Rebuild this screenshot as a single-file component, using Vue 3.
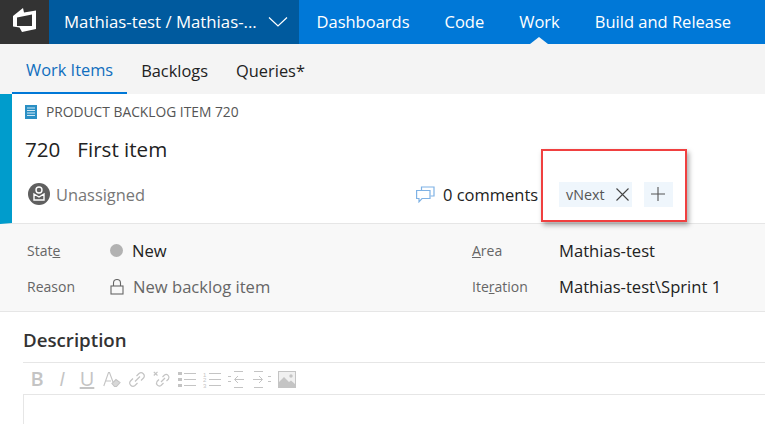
<script setup>
const nav = ['Dashboards', 'Code', 'Work', 'Build and Release']
const tabs = ['Work Items', 'Backlogs', 'Queries*']
</script>

<template>
  <div class="page">
    <header class="topbar">
      <div class="logo">
        <svg width="49" height="44" viewBox="0 0 49 44">
          <path fill-rule="evenodd" d="M13 16 L23 8 L24 12.500 L36 10.500 V29 L22 32 L19.500 27.500 L13 26.500 Z M17 17.500 V26 H32 V14.500 Z" fill="#fff" />
        </svg>
      </div>
      <div class="project">
        <span>Mathias-test / Mathias-...</span>
        <svg width="20" height="10" viewBox="0 0 20 10"><path d="M1 .5 L10 9 L19 .5" fill="none" stroke="#fff" stroke-width="1.2" /></svg>
      </div>
      <nav class="nav">
        <a v-for="n in nav" :key="n" :class="{ on: n === 'Work' }">{{ n }}</a>
      </nav>
    </header>
    <div class="tabs">
      <a v-for="(t, i) in tabs" :key="t" :class="{ active: i === 0 }">{{ t }}</a>
    </div>
    <section class="head">
      <div class="type">
        <svg width="12" height="14" viewBox="0 0 12 14">
          <rect width="12" height="14" fill="#2a8fc4" />
          <path d="M2 3h8M2 5.500h8M2 8h8M2 10.500h8" stroke="#cfe8f5" stroke-width="1" />
        </svg>
        <span>PRODUCT BACKLOG ITEM 720</span>
      </div>
      <div class="title"><span class="id">720</span><span>First item</span></div>
      <div class="meta">
        <div class="assignee">
          <svg width="22" height="22" viewBox="0 0 22 22">
            <circle cx="11" cy="11" r="11" fill="#5f5f5f" />
            <circle cx="11" cy="7" r="3" fill="none" stroke="#fff" stroke-width="1.4" />
            <path d="M6 11 L11 14 L16 11 V17 H6Z" fill="none" stroke="#fff" stroke-width="1.4" />
          </svg>
          <span>Unassigned</span>
        </div>
        <div class="comments">
          <svg width="19" height="17" viewBox="0 0 19 17" fill="none" stroke="#7fb2e5" stroke-width="1.2">
            <path d="M5.500 4.500 V1 H18 V10 H14.500" />
            <path d="M.6 4.500 H14 V12.500 H6 L3 15.800 V12.500 H.6Z" />
          </svg>
          <span>0 comments</span>
        </div>
        <div class="tags">
          <span class="tag">vNext
            <svg width="13" height="13" viewBox="0 0 13 13"><path d="M.5.5l12 12M12.500.5l-12 12" stroke="#444" stroke-width="1.100" /></svg>
          </span>
          <span class="add">
            <svg width="14" height="14" viewBox="0 0 14 14"><path d="M7 0v14M0 7h14" stroke="#555" stroke-width="1.100" /></svg>
          </span>
        </div>
        <div class="callout"></div>
      </div>
    </section>
    <section class="fields">
      <div class="col left">
        <div class="row"><label>Stat<u>e</u></label><div class="val"><i class="dot"></i>New</div></div>
        <div class="row"><label>Reason</label><div class="val muted">
          <svg width="14" height="16" viewBox="0 0 14 16" fill="none" stroke="#666" stroke-width="1.100"><rect x="1" y="7" width="12" height="8" /><path d="M3.500 7V4a3.500 3.500 0 0 1 7 0v3" /></svg>
          New backlog item</div></div>
      </div>
      <div class="col right">
        <div class="row"><label><u>A</u>rea</label><div class="val">Mathias-test</div></div>
        <div class="row"><label>Ite<u>r</u>ation</label><div class="val">Mathias-test\Sprint 1</div></div>
      </div>
    </section>
    <section class="desc">
      <h2>Description</h2>
      <div class="toolbar">
        <span class="slot bold">B</span>
        <span class="slot ital">I</span>
        <span class="slot under">U</span>
        <span class="slot">
          <svg width="18" height="17" viewBox="0 0 18 17" fill="none" stroke="#c4c4c4" stroke-width="1.100"><path d="M.8 15 L5.500 1.500 H6.500 L10 11 M2.800 10 H8" /><path d="M9 12.500 L13 8.500 L17 11.500 L13.500 15.500 H11.500Z" fill="#d8d8d8" /></svg>
        </span>
        <span class="slot">
          <svg width="18" height="17" viewBox="0 0 18 17" fill="none" stroke="#c4c4c4" stroke-width="1.200"><path d="M7 10.500 L12 5.500" /><path d="M8.500 5 L11 2.500 a3.200 3.200 0 0 1 4.500 4.500 L13 9.500" /><path d="M9.500 12 L7 14.500 a3.200 3.200 0 0 1 -4.500 -4.500 L5 7.500" /></svg>
        </span>
        <span class="slot">
          <svg width="18" height="17" viewBox="0 0 18 17" fill="none" stroke="#c4c4c4" stroke-width="1.200"><path d="M8 11 L12 7" /><path d="M9.500 6 L11.500 4 a2.900 2.900 0 0 1 4 4 L13.500 10" /><path d="M10.500 12 L8 14.500 a2.900 2.900 0 0 1 -4 -4 L6 8.500" /><path d="M.8 .8 L4.500 4.500 M4.500 .8 L.8 4.500" /></svg>
        </span>
        <span class="slot">
          <svg width="18" height="17" viewBox="0 0 18 17" fill="#c4c4c4"><rect x="0" y="1" width="4" height="3" /><rect x="0" y="7" width="4" height="3" /><rect x="0" y="13" width="4" height="3" /><path d="M6 2h12v1H6zM6 8h12v1H6zM6 14h12v1H6z" /></svg>
        </span>
        <span class="slot">
          <svg width="18" height="17" viewBox="0 0 18 17" fill="#c4c4c4"><text x="0" y="5.500" font-size="6" font-family="Liberation Sans, sans-serif">1</text><text x="0" y="11" font-size="6" font-family="Liberation Sans, sans-serif">2</text><text x="0" y="16.500" font-size="6" font-family="Liberation Sans, sans-serif">3</text><path d="M6 2h12v1H6zM6 8h12v1H6zM6 14h12v1H6z" /></svg>
        </span>
        <span class="slot">
          <svg width="18" height="17" viewBox="0 0 18 17" fill="none" stroke="#c4c4c4"><path d="M6 .5h9M6 16.500h9M0 5.500h3M0 10.500h3M7 8.500h9M10 5 L6.500 8.500 L10 12" /></svg>
        </span>
        <span class="slot">
          <svg width="18" height="17" viewBox="0 0 18 17" fill="none" stroke="#c4c4c4"><path d="M1 .5h9M1 16.500h9M15 5.500h3M15 10.500h3M0 8.500h9M6 5 L9.500 8.500 L6 12" /></svg>
        </span>
        <span class="slot">
          <svg width="18" height="17" viewBox="0 0 18 17"><rect width="18" height="17" fill="#c4c4c4" /><rect x="1" y="1" width="16" height="15" fill="#f0f0f0" /><circle cx="13" cy="5" r="1.700" fill="#c4c4c4" /><path d="M1 11 L6 6 L11 11 L13 9.500 L17 13 V16 H1Z" fill="#c4c4c4" /></svg>
        </span>
      </div>
      <div class="editor"></div>
    </section>
  </div>
</template>

<style>
html, body { margin: 0; overflow: hidden; }
</style>

<style scoped>
.page { width: 765px; height: 424px; overflow: hidden; background: #fff; font-family: "Open Sans", "Liberation Sans", sans-serif; color: #222; }
.topbar { display: flex; height: 44px; background: #0078d7; color: #fff; font-size: 16.500px; }
.logo { width: 49px; background: #333; flex: none; }
.logo svg { display: block; }
.project { width: 250px; flex: none; background: #005a9e; display: flex; align-items: center; justify-content: space-between; padding: 0 11px 0 15px; box-sizing: border-box; font-size: 16.800px; }
.project span { padding-bottom: 1px; }
.nav { display: flex; }
.nav a { display: flex; align-items: center; padding: 0 17.500px 1px; position: relative; }
.nav a.on::after { content: ""; position: absolute; left: 50%; bottom: 0; margin-left: -9px; border: 7px solid transparent; border-top: 0; border-left-width: 9px; border-right-width: 9px; border-bottom-color: #f4f4f4; }
.tabs { display: flex; height: 50px; background: #f4f4f4; padding-left: 12px; font-size: 16.400px; }
.tabs a { display: flex; align-items: center; padding: 2px 14px 0; box-sizing: border-box; }
.tabs a.active { color: #106ebe; border-bottom: 2px solid #0078d7; }
.head { height: 130px; border-left: 12px solid #009ccc; box-sizing: border-box; border-bottom: 1px solid #e6e6e6; padding-left: 13px; display: flex; flex-direction: column; }
.type { display: flex; align-items: center; gap: 9px; font-size: 13.800px; color: #555; padding-top: 9px; height: 17px; }
.title { font-size: 20.600px; padding-top: 15px; height: 28px; display: flex; gap: 17px; }
.meta { display: flex; align-items: center; position: relative; margin-top: 16px; height: 30px; }
.assignee { display: flex; align-items: center; gap: 6px; font-size: 16.400px; color: #777; width: 388px; margin-left: 3px; }
.comments { display: flex; align-items: center; gap: 8px; font-size: 16.500px; width: 143px; }
.assignee span, .comments span { padding-top: 1px; }
.tags { display: flex; gap: 12px; align-items: center; font-size: 14.300px; color: #555; }
.tag { height: 25px; width: 73px; box-sizing: border-box; background: #eff6fc; display: flex; align-items: center; justify-content: space-between; padding: 0 3px 0 7px; }
.add { height: 25px; width: 29px; box-sizing: border-box; padding-right: 2px; background: #eff6fc; display: flex; align-items: center; justify-content: center; }
.callout { position: absolute; left: 516px; top: -30px; width: 142px; height: 69px; border: 2px solid #f04040; box-shadow: 2px 3px 5px rgba(0,0,0,.35); }
.fields { height: 88px; background: #f8f8f8; border-bottom: 1px solid #e6e6e6; box-sizing: border-box; display: flex; font-size: 16.600px; }
.col { display: flex; flex-direction: column; padding-top: 16px; gap: 15px; }
.left { width: 472px; padding-left: 27px; box-sizing: border-box; }
.row { display: flex; align-items: center; height: 21px; }
.row label { font-size: 14px; color: #666; width: 83px; }
.right .row label { width: 87px; }
.val { display: flex; align-items: center; gap: 9px; }
.val.muted { color: #666; }
.dot { width: 13px; height: 13px; border-radius: 50%; background: #b2b2b2; }
.desc { padding: 0 0 0 23px; }
h2 { margin: 0; font-size: 18.700px; font-weight: 600; padding-top: 16px; height: 34px; border-bottom: 1px solid #e6e6e6; line-height: 24px; color: #333; }
.toolbar { display: flex; align-items: center; height: 30px; padding: 1px 0 0 1.500px; color: #c4c4c4; }
.slot { width: 25px; flex: none; display: flex; align-items: center; justify-content: center; font-size: 20px; line-height: 1; }
.slot svg { display: block; }
.bold { font-weight: 600; }
.ital { font-style: italic; }
.under { text-decoration: underline; }
.editor { height: 40px; border: 1px solid #e6e6e6; border-right: 0; }
</style>
